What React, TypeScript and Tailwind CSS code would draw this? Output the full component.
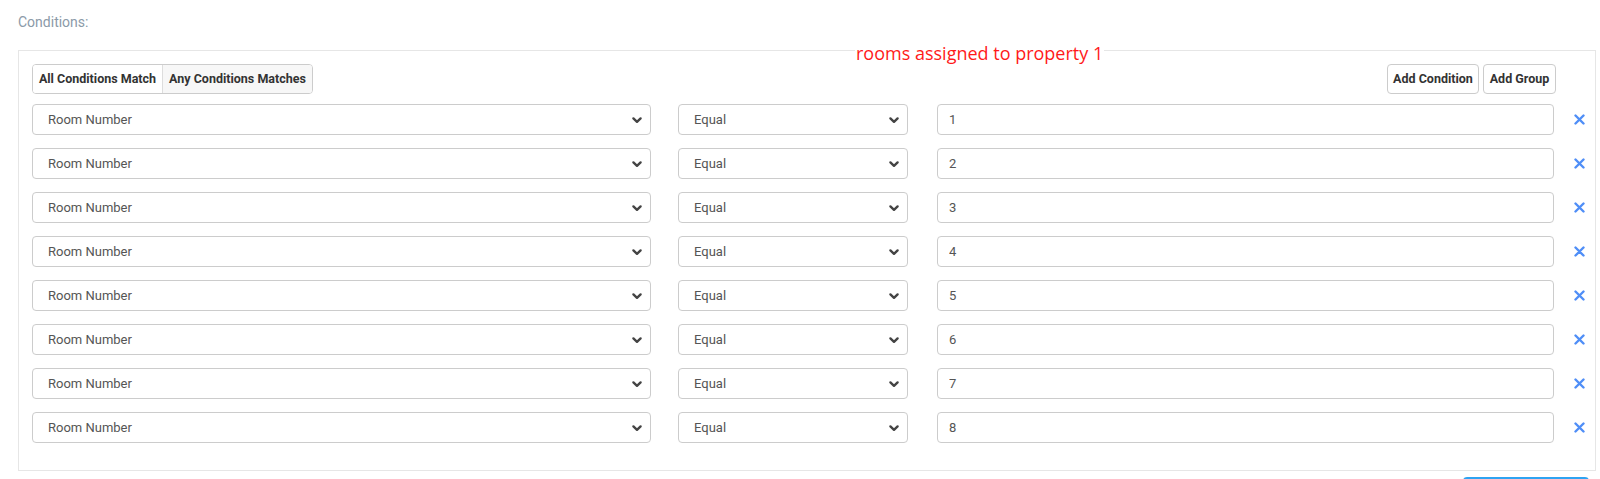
import { useState } from 'react';

const font = { fontFamily: 'Roboto, "Liberation Sans", sans-serif' };

function Chevron() {
  return (
    <svg
      className="pointer-events-none absolute right-[8px] top-1/2 -translate-y-1/2"
      width="12"
      height="12"
      viewBox="0 0 12 12"
      fill="none"
    >
      <path d="M2.4 4.4 L6 7.8 L9.6 4.4" stroke="#444" strokeWidth="2.4" strokeLinecap="round" strokeLinejoin="round" />
    </svg>
  );
}

function CloseIcon() {
  return (
    <svg width="11" height="11" viewBox="0 0 11 11" fill="none">
      <path d="M1.5 1.5 L9.5 9.5 M9.5 1.5 L1.5 9.5" stroke="#4f8ef7" strokeWidth="2.4" strokeLinecap="round" />
    </svg>
  );
}

interface RowProps {
  value: string;
}

function ConditionRow({ value }: RowProps) {
  return (
    <div className="flex items-center h-[31px]">
      <div className="relative w-[619px] h-full">
        <select
          defaultValue="room"
          className="appearance-none w-full h-full rounded-[4px] border border-[#cccccc] bg-white pl-[15px] pr-6 text-[13px] text-[#555555] outline-none"
          style={font}
        >
          <option value="room">Room Number</option>
        </select>
        <Chevron />
      </div>
      <div className="relative w-[230px] h-full ml-[27px]">
        <select
          defaultValue="eq"
          className="appearance-none w-full h-full rounded-[4px] border border-[#cccccc] bg-white pl-[15px] pr-6 text-[13px] text-[#555555] outline-none"
          style={font}
        >
          <option value="eq">Equal</option>
        </select>
        <Chevron />
      </div>
      <input
        defaultValue={value}
        className="ml-[29px] w-[617px] h-full rounded-[4px] border border-[#cccccc] bg-white px-[11px] text-[13px] text-[#555555] outline-none"
        style={font}
      />
      <button className="ml-[19px] flex items-center justify-center w-[12px] h-[12px]">
        <CloseIcon />
      </button>
    </div>
  );
}

export default function App() {
  const [mode, setMode] = useState<'all' | 'any'>('any');
  const rows = ['1', '2', '3', '4', '5', '6', '7', '8'];

  return (
    <div className="relative w-[1600px] h-[479px] overflow-hidden bg-white pl-[18px] pr-[4px]" style={font}>
      <div className="pt-[12px] h-[50px] text-[14px] leading-[20px] text-[#8b9aa8]">Conditions:</div>

      {/* Conditions panel */}
      <div className="relative border border-[#e6e6e6] pl-[13px] pt-[13px] pb-[27px]">
        <div className="absolute left-[836px] top-[-10px] bg-white px-[1px] text-[18px] leading-[24px] text-[#ff1a1a]" style={{ fontFamily: '"Open Sans", "Noto Sans", sans-serif' }}>
          rooms assigned to property 1
        </div>

        <div className="flex items-center justify-between pr-[39px] h-[30px]">
          <div className="flex h-full rounded-[4px] border border-[#cccccc] overflow-hidden">
            <button
              onClick={() => setMode('all')}
              className={`px-[4px] w-[130px] h-full text-[12.5px] font-bold text-[#333333] border-r border-[#dddddd] whitespace-nowrap ${mode === 'all' ? 'bg-[#f3f3f3]' : 'bg-white'}`}
            >
              All Conditions Match
            </button>
            <button
              onClick={() => setMode('any')}
              className={`px-[4px] w-[149px] h-full text-[12.5px] font-bold text-[#333333] whitespace-nowrap ${mode === 'any' ? 'bg-[#f7f7f7]' : 'bg-white'}`}
            >
              Any Conditions Matches
            </button>
          </div>
          <div className="flex gap-[4px] h-full">
            <button className="w-[92px] h-full rounded-[4px] border border-[#cccccc] bg-white text-[12.5px] font-bold text-[#333333] whitespace-nowrap">
              Add Condition
            </button>
            <button className="w-[73px] h-full rounded-[4px] border border-[#cccccc] bg-white text-[12.5px] font-bold text-[#333333] whitespace-nowrap">
              Add Group
            </button>
          </div>
        </div>

        <div className="mt-[10px] flex flex-col gap-[13px]">
          {rows.map((r) => (
            <ConditionRow key={r} value={r} />
          ))}
        </div>
      </div>

      <div className="flex justify-end pr-[7px] mt-[6px]">
        <button aria-label="Save" className="w-[126px] h-[34px] rounded-[4px] bg-[#2ea3f2]" />
      </div>
    </div>
  );
}
